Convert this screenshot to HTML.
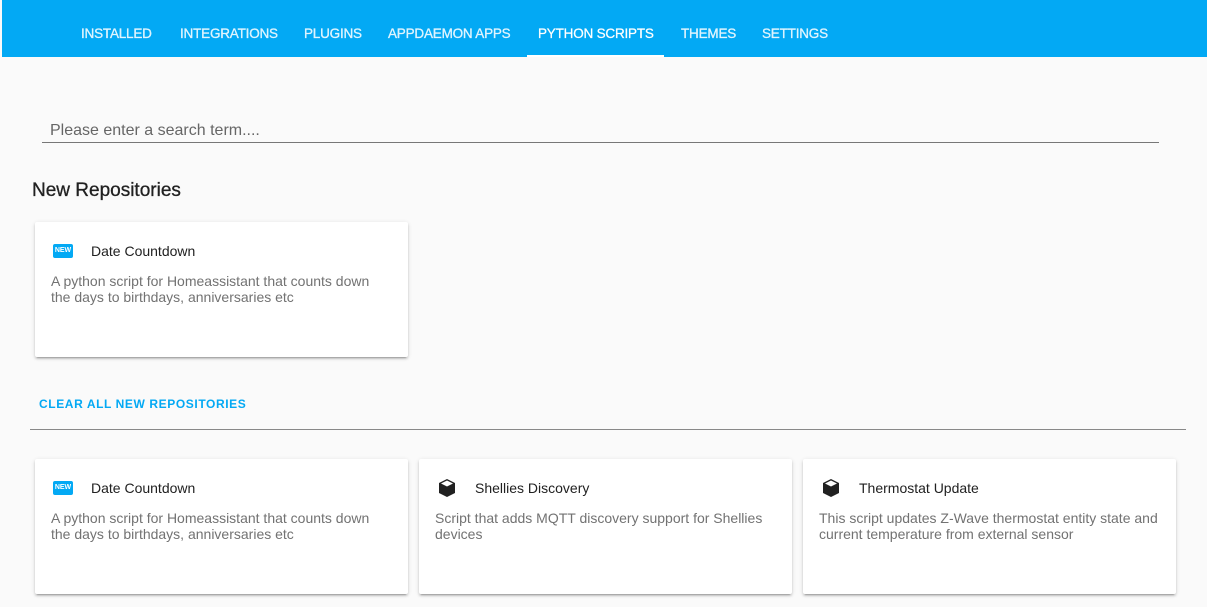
<!DOCTYPE html>
<html><head><style>
body{margin:0;width:1207px;height:607px;overflow:hidden;background:#fafafa;font-family:"Liberation Sans",Arial,sans-serif;position:relative}
.hdr{position:absolute;left:2px;top:0;width:1205px;height:57px;background:#03a9f4}
.tab{position:absolute;top:26px;font-size:13.5px;color:rgba(255,255,255,.85);letter-spacing:-.2px;-webkit-text-stroke:.3px rgba(255,255,255,.85)}
.tab.a{color:#fff}
.ul{position:absolute;left:527px;top:55px;width:137px;height:2px;background:#fff}
.search{position:absolute;left:42px;top:122px;width:1117px;height:21px;border-bottom:1px solid #777;color:#666;font-size:16px;padding-left:8px;box-sizing:border-box}
h2{position:absolute;left:32px;top:180px;margin:0;font-size:19px;font-weight:normal;color:#212121;-webkit-text-stroke:.3px #212121}
.card{position:absolute;width:373px;height:135px;background:#fff;border-radius:2px;box-shadow:0 2px 2px rgba(0,0,0,.14),0 1px 5px rgba(0,0,0,.12),0 3px 1px -2px rgba(0,0,0,.2)}
.t{position:absolute;left:56px;top:21px;font-size:14px;color:#212121}
.d{position:absolute;left:16px;top:51px;width:340px;font-size:14px;line-height:16px;color:#727272}
.new{position:absolute;left:18px;top:22px;width:20px;height:14px;background:#03a9f4;border-radius:2px;color:#fff;font-size:7px;font-weight:bold;text-align:center;line-height:14px}
.ic{position:absolute;left:18px;top:19px}
.clr{position:absolute;left:39px;top:397px;color:#03a9f4;font-size:12px;font-weight:bold;letter-spacing:.6px}
.hr{position:absolute;left:30px;top:429px;width:1156px;height:1px;background:#888}
</style></head><body>
<div class="hdr"></div>
<div class="tab" style="left:81px">INSTALLED</div>
<div class="tab" style="left:180px">INTEGRATIONS</div>
<div class="tab" style="left:304px">PLUGINS</div>
<div class="tab" style="left:388px">APPDAEMON APPS</div>
<div class="tab a" style="left:538px">PYTHON SCRIPTS</div>
<div class="tab" style="left:681px">THEMES</div>
<div class="tab" style="left:762px">SETTINGS</div>
<div class="ul"></div>
<div class="search">Please enter a search term....</div>
<h2>New Repositories</h2>
<div class="card" style="left:35px;top:222px"><div class="new">NEW</div><div class="t">Date Countdown</div><div class="d">A python script for Homeassistant that counts down the days to birthdays, anniversaries etc</div></div>
<div class="clr">CLEAR ALL NEW REPOSITORIES</div>
<div class="hr"></div>
<div class="card" style="left:35px;top:459px"><div class="new">NEW</div><div class="t">Date Countdown</div><div class="d">A python script for Homeassistant that counts down the days to birthdays, anniversaries etc</div></div>
<div class="card" style="left:419px;top:459px"><svg class="ic" width="20" height="20" viewBox="0 0 20 20"><path d="M10 1 L18 5 L18 15 L10 19 L2 15 L2 5 Z" fill="#212121"/><path d="M4 5.5 L10 2.5 L16 5.5 L10 8.5 Z" fill="#fff"/></svg><div class="t">Shellies Discovery</div><div class="d">Script that adds MQTT discovery support for Shellies devices</div></div>
<div class="card" style="left:803px;top:459px"><svg class="ic" width="20" height="20" viewBox="0 0 20 20"><path d="M10 1 L18 5 L18 15 L10 19 L2 15 L2 5 Z" fill="#212121"/><path d="M4 5.5 L10 2.5 L16 5.5 L10 8.5 Z" fill="#fff"/></svg><div class="t">Thermostat Update</div><div class="d">This script updates Z-Wave thermostat entity state and current temperature from external sensor</div></div>
</body></html>
